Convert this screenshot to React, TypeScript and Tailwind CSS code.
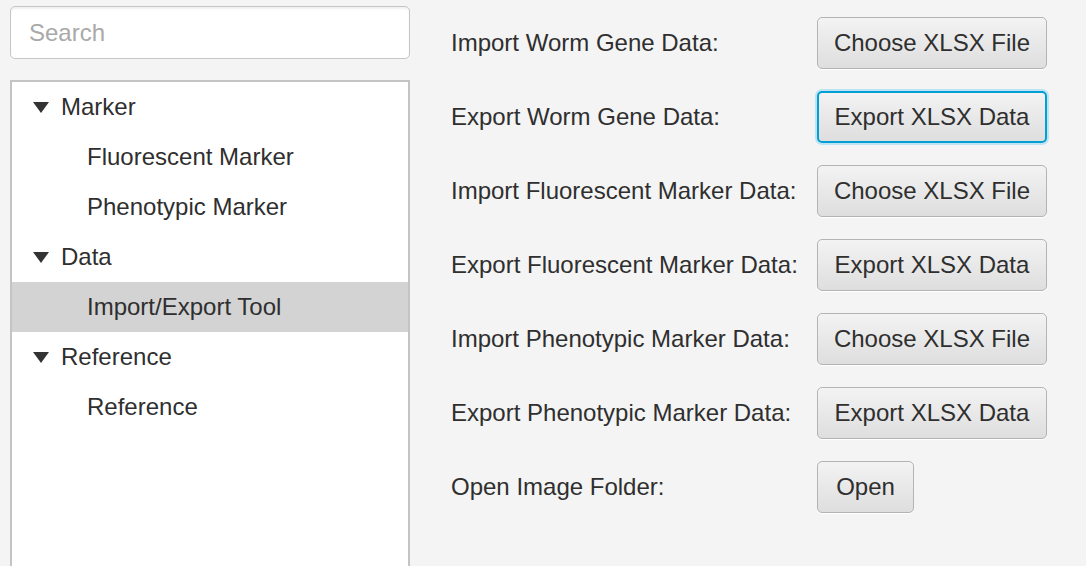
import React from 'react';

type TreeRow = { label: string; level: 0 | 1; selected?: boolean };

const treeRows: TreeRow[] = [
  { label: 'Marker', level: 0 },
  { label: 'Fluorescent Marker', level: 1 },
  { label: 'Phenotypic Marker', level: 1 },
  { label: 'Data', level: 0 },
  { label: 'Import/Export Tool', level: 1, selected: true },
  { label: 'Reference', level: 0 },
  { label: 'Reference', level: 1 },
];

const actions = [
  { label: 'Import Worm Gene Data:', button: 'Choose XLSX File' },
  { label: 'Export Worm Gene Data:', button: 'Export XLSX Data', focused: true },
  { label: 'Import Fluorescent Marker Data:', button: 'Choose XLSX File' },
  { label: 'Export Fluorescent Marker Data:', button: 'Export XLSX Data' },
  { label: 'Import Phenotypic Marker Data:', button: 'Choose XLSX File' },
  { label: 'Export Phenotypic Marker Data:', button: 'Export XLSX Data' },
  { label: 'Open Image Folder:', button: 'Open', small: true },
];

const Arrow = () => (
  <svg width="16" height="12" viewBox="0 0 16 12" className="shrink-0">
    <polygon points="0,1 16,1 8,12" fill="#333333" />
  </svg>
);

export default function App() {
  return (
    <div className="h-[566px] w-full overflow-hidden bg-[#f4f4f4] flex text-[#2f2f2f] text-[24px] font-['Liberation_Sans',Arial,sans-serif]">
      {/* left: search + tree */}
      <div className="w-[410px] shrink-0 pl-[10px] pt-[6px] flex flex-col gap-[21px]">
        <div className="h-[53px] shrink-0 rounded-[5px] border border-[#c6c6c6] bg-white shadow-[inset_0_2px_2px_rgba(0,0,0,0.06)] flex items-center pl-[18px]">
          <span className="text-[#a9a9a9]">Search</span>
        </div>
        <div className="h-[520px] shrink-0 border-2 border-[#c4c4c4] bg-white">
          {treeRows.map((row, i) => (
            <div
              key={i}
              className={`h-[50px] flex items-center ${row.selected ? 'bg-[#d3d3d3]' : ''} ${row.level === 0 ? 'pl-[21px] gap-[12px]' : 'pl-[75px]'}`}
            >
              {row.level === 0 && <Arrow />}
              <span>{row.label}</span>
            </div>
          ))}
        </div>
      </div>

      {/* right: import / export actions */}
      <div className="ml-[41px] pt-[17px] grid grid-cols-[366px_auto] auto-rows-[52px] gap-y-[22px] content-start">
        {actions.map((a, i) => (
          <React.Fragment key={i}>
            <div className="flex items-center">{a.label}</div>
            <div className="flex items-center">
              <button
                className={`h-[52px] ${a.small ? 'w-[97px]' : 'w-[230px]'} rounded-[5px] bg-gradient-to-b from-[#f3f3f3] to-[#dedede] text-[#2f2f2f] ${
                  a.focused
                    ? 'border-2 border-[#039ed3] shadow-[0_0_0_2px_#bde3f4]'
                    : 'border border-[#b4b4b4] shadow-[0_1px_0_#ffffff]'
                }`}
              >
                {a.button}
              </button>
            </div>
          </React.Fragment>
        ))}
      </div>
    </div>
  );
}
